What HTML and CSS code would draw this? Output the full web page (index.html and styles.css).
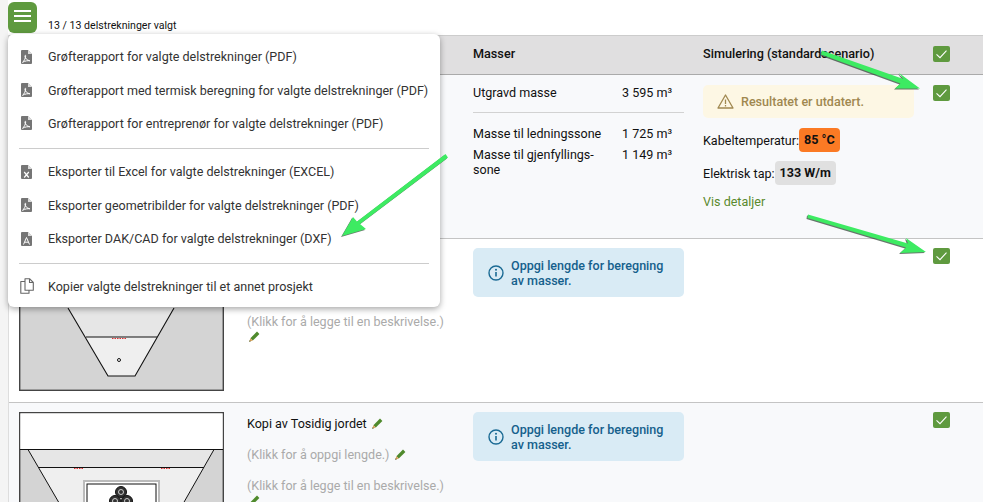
FILE: index.html
```html
<!DOCTYPE html>
<html lang="no">
<head>
<meta charset="utf-8">
<title>Delstrekninger</title>
<link rel="stylesheet" href="styles.css">
</head>
<body>
<svg width="0" height="0" class="defs">
  <symbol id="i-pdf" viewBox="0 0 11 14"><path fill="#757575" d="M1 0h6l4 4v9a1 1 0 0 1-1 1H1a1 1 0 0 1-1-1V1a1 1 0 0 1 1-1z"/><path fill="#fff" d="M7 0l4 4H7z" opacity=".75"/><path fill="none" stroke="#fff" stroke-width="1" d="M1.500 12.300c1.500-1 3-3.800 3.200-6.300.1-1-.9-.9-.8.200.3 2 2 4.100 5 4.600-2-.3-4.800 0-7.400 1.500z"/></symbol>
  <symbol id="i-xls" viewBox="0 0 11 14"><path fill="#757575" d="M1 0h6l4 4v9a1 1 0 0 1-1 1H1a1 1 0 0 1-1-1V1a1 1 0 0 1 1-1z"/><path fill="#fff" d="M7 0l4 4H7z" opacity=".75"/><path fill="none" stroke="#fff" stroke-width="1.200" d="M3.200 7l4.600 5.500M7.800 7l-4.600 5.500"/></symbol>
  <symbol id="i-cad" viewBox="0 0 11 14"><path fill="#757575" d="M1 0h6l4 4v9a1 1 0 0 1-1 1H1a1 1 0 0 1-1-1V1a1 1 0 0 1 1-1z"/><path fill="#fff" d="M7 0l4 4H7z" opacity=".75"/><path fill="none" stroke="#fff" stroke-width="1" d="M2.500 12.500L5.500 5.500l3 7M3.600 10.200h3.800"/></symbol>
  <symbol id="i-pen" viewBox="0 0 11 11"><path fill="#4f8a2c" d="M8 .6l2.400 2.400-6.600 6.600-2.400-2.400z"/><path fill="#d9a05b" d="M1.400 7.200L.2 10.800l3.600-1.200z"/><path fill="#2c4a18" d="M.2 10.800l.5-1.600 1.100 1.100z"/></symbol>
  <symbol id="i-check" viewBox="0 0 17 16"><rect width="17" height="16" rx="2" fill="#5f9a3f"/><path d="M3.500 8.300l3.500 3.300 6.500-7" fill="none" stroke="#fff" stroke-width="1.100"/></symbol>
  <symbol id="i-info" viewBox="0 0 16 16"><circle cx="8" cy="8" r="7" fill="none" stroke="#1a6a94" stroke-width="1.400"/><path d="M8 7v4.500" stroke="#1a6a94" stroke-width="1.600"/><circle cx="8" cy="4.700" r="1" fill="#1a6a94"/></symbol>
</svg>

<div class="app">
  <div class="topbar">
    <button class="menu-btn" aria-label="Meny"><span></span><span></span><span></span></button>
    <span class="count">13 / 13 delstrekninger valgt</span>
  </div>

  <div class="table">
    <div class="row head">
      <div></div>
      <div></div>
      <div class="head-cell">Masser</div>
      <div class="head-cell">Simulering (standardscenario)</div>
      <div class="check-cell"><svg class="check"><use href="#i-check"/></svg></div>
    </div>

    <div class="row first tinted">
      <div></div>
      <div></div>
      <div class="masses">
        <div class="mass-line"><span>Utgravd masse</span><span>3 595 m³</span></div>
        <hr class="mass-rule">
        <div class="mass-line"><span>Masse til ledningssone</span><span>1 725 m³</span></div>
        <div class="mass-line"><span>Masse til gjenfyllings-<br>sone</span><span>1 149 m³</span></div>
      </div>
      <div class="sim">
        <div class="warn">
          <svg class="warn-icon" viewBox="0 0 17 15"><path d="M8.500 1L16 14H1z" fill="none" stroke="#a08850" stroke-width="1.300" stroke-linejoin="round"/><path d="M8.500 5.500v4.500M8.500 11v1.600" stroke="#a08850" stroke-width="1.300"/></svg>
          <span>Resultatet er utdatert.</span>
        </div>
        <div class="metric">Kabeltemperatur:<b class="badge hot">85 °C</b></div>
        <div class="metric">Elektrisk tap:<b class="badge">133 W/m</b></div>
        <a class="details">Vis detaljer</a>
      </div>
      <div class="check-cell"><svg class="check"><use href="#i-check"/></svg></div>
    </div>

    <div class="row">
      <div class="pic">
        <svg class="trench" viewBox="0 0 205 143">
          <rect x=".7" y=".7" width="203.600" height="141.600" fill="#d4d4d4" stroke="#444" stroke-width="1.400"/>
          <rect x="1.400" y="1.400" width="202.200" height="36.600" fill="#fff"/>
          <path d="M1 38h203" stroke="#111"/>
          <path d="M36 38H168L138 89H66z" fill="#e6e6e6"/>
          <path d="M66 89h72l-22 39H89z" fill="#efefef"/>
          <path d="M49 60l40 68h27l39-68" fill="none" stroke="#111" stroke-width="1.100"/>
          <path d="M67 89h71" stroke="#111"/>
          <path d="M93 90.500h14" stroke="#d33" stroke-dasharray="1.500 1"/>
          <circle cx="100" cy="112" r="1.500" fill="#fff" stroke="#111"/>
        </svg>
      </div>
      <div class="info-col covered-top">
        <div class="hint">(Klikk for å legge til en beskrivelse.) <svg class="pen"><use href="#i-pen"/></svg></div>
      </div>
      <div class="note"><svg class="note-icon"><use href="#i-info"/></svg><span>Oppgi lengde for beregning av masser.</span></div>
      <div></div>
      <div class="check-cell"><svg class="check"><use href="#i-check"/></svg></div>
    </div>

    <div class="row tinted">
      <div class="pic">
        <svg class="trench" viewBox="0 0 205 143">
          <rect x=".7" y=".7" width="203.600" height="141.600" fill="#d4d4d4" stroke="#444" stroke-width="1.400"/>
          <rect x="1.400" y="1.400" width="202.200" height="36.600" fill="#fff"/>
          <path d="M9 37.500h186l-10 18H19.500z" fill="#e6e6e6"/>
          <path d="M19.500 55.500H185L148 120H57z" fill="#efefef"/>
          <path d="M1 37.500h203" stroke="#111"/>
          <path d="M9 37.500L57 120M195 37.500L148 120M20 55.500h165" fill="none" stroke="#111"/>
          <path d="M55 56.500h9M142 56.500h9" stroke="#d33" stroke-dasharray="1.500 1"/>
          <rect x="65" y="69" width="75" height="60" fill="#fff" stroke="#bbb" stroke-width="2"/>
          <rect x="68" y="72" width="69" height="55" fill="#fff" stroke="#111"/>
          <g fill="#333" stroke="#111"><circle cx="102" cy="80" r="5.500"/><circle cx="96" cy="89" r="5.500"/><circle cx="108" cy="89" r="5.500"/></g>
          <g fill="none" stroke="#ccc"><circle cx="102" cy="80" r="2.500"/><circle cx="96" cy="89" r="2.500"/><circle cx="108" cy="89" r="2.500"/></g>
        </svg>
      </div>
      <div class="info-col">
        <div class="title">Kopi av Tosidig jordet <svg class="pen"><use href="#i-pen"/></svg></div>
        <div class="hint">(Klikk for å oppgi lengde.) <svg class="pen"><use href="#i-pen"/></svg></div>
        <div class="hint">(Klikk for å legge til en beskrivelse.) <svg class="pen"><use href="#i-pen"/></svg></div>
      </div>
      <div class="note"><svg class="note-icon"><use href="#i-info"/></svg><span>Oppgi lengde for beregning av masser.</span></div>
      <div></div>
      <div class="check-cell"><svg class="check"><use href="#i-check"/></svg></div>
    </div>
  </div>

  <div class="menu">
    <div class="item"><svg class="file"><use href="#i-pdf"/></svg>Grøfterapport for valgte delstrekninger (PDF)</div>
    <div class="item"><svg class="file"><use href="#i-pdf"/></svg>Grøfterapport med termisk beregning for valgte delstrekninger (PDF)</div>
    <div class="item"><svg class="file"><use href="#i-pdf"/></svg>Grøfterapport for entreprenør for valgte delstrekninger (PDF)</div>
    <hr class="menu-rule">
    <div class="item"><svg class="file"><use href="#i-xls"/></svg>Eksporter til Excel for valgte delstrekninger (EXCEL)</div>
    <div class="item"><svg class="file"><use href="#i-pdf"/></svg>Eksporter geometribilder for valgte delstrekninger (PDF)</div>
    <div class="item"><svg class="file"><use href="#i-cad"/></svg>Eksporter DAK/CAD for valgte delstrekninger (DXF)</div>
    <hr class="menu-rule tight">
    <div class="item"><svg class="copy" viewBox="0 0 14 16"><path d="M5 .7h4.500L13.300 4.500v7.800H5zM9.500.7v3.800h3.800M5 3.500H.8v11.800h8.200v-3" fill="none" stroke="#666" stroke-width="1.100" stroke-linejoin="round"/></svg>Kopier valgte delstrekninger til et annet prosjekt</div>
  </div>

  <svg class="arrows" viewBox="0 0 983 502">
    <g fill="#3deb62">
      <path d="M822 50.500l81.500 28.500 -4.500-6 21 15.500-25 0 5.500-5-79.500-29z" class="arrow"/>
      <path d="M808 214.500l100 29-2-5.500 20 14-26 1 6-5.500-98.500-29.500z" class="arrow"/>
      <path d="M445.500 154l2.500 3.500-88 66.500 6 5-24 7 11-19 4 4.500z" class="arrow"/>
    </g>
  </svg>
</div>
</body>
</html>
```
FILE: styles.css
```css
* { box-sizing: border-box; }
html, body { margin: 0; height: 100%; }
body {
  overflow: hidden;
  background: #fff;
  color: #111;
  font: 12.56px/15px Roboto, "Liberation Sans", sans-serif;
}
.defs { position: absolute; }
.app { position: relative; height: 502px; overflow: hidden; background: #f4f4f4; }

.topbar {
  display: flex;
  align-items: flex-start;
  height: 35px;
  margin-left: 8px;
  background: #fff;
}
.menu-btn {
  display: flex;
  flex-direction: column;
  justify-content: flex-start;
  gap: 3px;
  width: 29px;
  height: 31px;
  margin-top: 2px;
  padding: 8px 6px 0;
  border: 0;
  border-radius: 6px;
  background: #5f9a3f;
}
.menu-btn span { display: block; height: 2px; background: #fff; }
.count { margin: 19px 0 0 11px; font-size: 10.6px; line-height: 14px; color: #111; }

.table { margin-left: 8px; border-left: 1px solid #ddd; background: #fff; }
.row {
  display: grid;
  grid-template-columns: 238px 226px 230px 230px 1fr;
  height: 164px;
  padding-top: 9px;
  border-bottom: 1px solid #c4c4c4;
}
.row.first { padding-top: 10px; }
.tinted { background: #f8f9fb; }
.row.head {
  height: 40px;
  padding: 0 0 2px;
  align-items: center;
  border-top: 1px solid #ccc;
  border-bottom: 1px solid #aaa;
  background: #e0dfe0;
}
.head-cell { margin-bottom: 2px; font-size: 12.65px; font-weight: 500; color: #111; }
.check-cell { display: flex; align-items: flex-start; }
.head .check-cell { align-items: center; }
.check { display: block; width: 17px; height: 16px; }

.pic { padding-left: 10px; }
.trench { display: block; width: 205px; height: 143px; }
.info-col { padding: 4px 20px 0 0; display: flex; flex-direction: column; gap: 16px; }
.info-col.covered-top { padding-top: 66px; }
.hint { color: #aaa; }
.title { color: #111; }
.pen { display: inline-block; width: 11px; height: 11px; margin-left: 2px; vertical-align: -1px; }

.masses { width: 211px; }
.mass-line { display: grid; grid-template-columns: 149px 1fr; margin-bottom: 6px; }
.mass-rule { height: 1px; margin: 12px 0 13px; border: 0; background: #d2d2d2; }

.sim { width: 211px; }
.warn {
  display: flex;
  align-items: center;
  gap: 7px;
  height: 33px;
  padding-left: 14px;
  margin-bottom: 10px;
  border-radius: 5px;
  background: #fdf7e4;
  color: #a08850;
  font-weight: 500;
}
.warn-icon { width: 17px; height: 15px; }
.metric { display: flex; align-items: center; height: 24px; margin-bottom: 9px; white-space: nowrap; }
.badge {
  display: inline-block;
  padding: 0 5px;
  line-height: 24px;
  border-radius: 4px;
  background: #e0e0e0;
  font-weight: 700;
}
.badge.hot { background: #fb7a24; }
.details { display: block; color: #5a8a2e; }

.note {
  display: flex;
  align-items: center;
  gap: 7px;
  align-self: start;
  width: 211px;
  height: 49px;
  padding: 0 12px 0 15px;
  border-radius: 5px;
  background: #d9ebf5;
  color: #15608c;
  font-weight: 500;
}
.note-icon { flex: none; width: 16px; height: 16px; }

.menu {
  position: absolute;
  left: 8px;
  top: 34px;
  width: 432px;
  height: 273px;
  padding: 6px 11px 0;
  border-radius: 6px;
  background: #fff;
  box-shadow: 0 2px 6px rgba(0,0,0,.35);
  color: #333;
}
.item { display: flex; align-items: center; height: 33.4px; white-space: nowrap; }
.file { width: 11px; height: 14px; margin: 0 16px 0 2px; flex: none; }
.copy { width: 14px; height: 16px; margin: 0 14px 0 1px; flex: none; }
.menu-rule { height: 1px; margin: 8px 0 6px; border: 0; background: #ccc; }
.menu-rule.tight { margin-bottom: 5px; }

.arrows { position: absolute; inset: 0; width: 983px; height: 502px; pointer-events: none; }
.arrow { filter: drop-shadow(-.5px 1px .5px rgba(40,60,45,.7)); }
```
